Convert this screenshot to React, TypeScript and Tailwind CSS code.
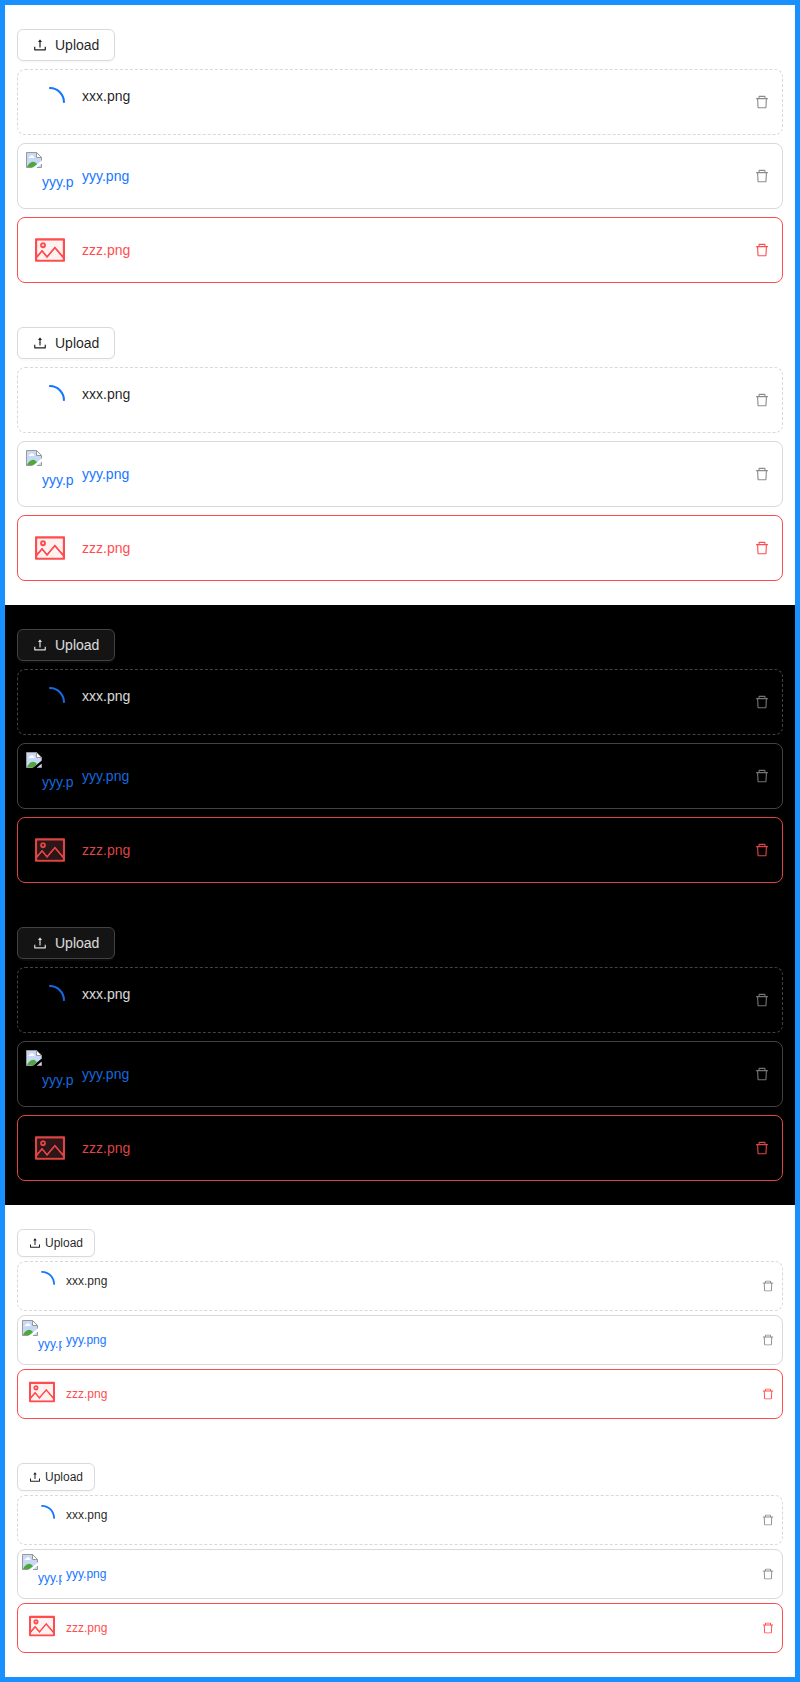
type Tone = 'light' | 'dark';

type Theme = {
  tone: Tone;
  compact: boolean;
};

type IconProps = { className: string };

const UploadIcon = ({ className }: IconProps) => (
  <svg viewBox="64 64 896 896" fill="currentColor" className={className}>
    <path d="M400 317.7h73.9V656c0 4.4 3.6 8 8 8h60c4.4 0 8-3.6 8-8V317.7H624c6.7 0 10.4-7.7 6.3-12.9L518.3 163a8 8 0 00-12.6 0l-112 141.7c-4.1 5.3-.4 13 6.3 13zM878 626h-60c-4.4 0-8 3.6-8 8v154H214V634c0-4.4-3.6-8-8-8h-60c-4.4 0-8 3.6-8 8v198c0 17.7 14.3 32 32 32h684c17.7 0 32-14.3 32-32V634c0-4.4-3.6-8-8-8z" />
  </svg>
);

const LoadingIcon = ({ className }: IconProps) => (
  <svg viewBox="0 0 1024 1024" fill="currentColor" className={className}>
    <path d="M988 548c-19.9 0-36-16.1-36-36 0-59.4-11.6-117-34.6-171.3a440.45 440.45 0 00-94.3-139.9 437.71 437.71 0 00-139.9-94.3C629 83.6 571.4 72 512 72c-19.9 0-36-16.1-36-36s16.1-36 36-36c69.1 0 136.2 13.5 199.3 40.3C772.3 66 827 103 874 150c47 47 83.9 101.8 109.7 162.7 26.7 63.1 40.2 130.2 40.2 199.3.1 19.9-16 36-35.9 36z" />
  </svg>
);

const DeleteIcon = ({ className }: IconProps) => (
  <svg viewBox="64 64 896 896" fill="currentColor" className={className}>
    <path d="M360 184h-8c4.4 0 8-3.6 8-8v8h304v-8c0 4.4 3.6 8 8 8h-8v72h72v-80c0-35.3-28.7-64-64-64H352c-35.3 0-64 28.7-64 64v80h72v-72zm504 72H160c-17.7 0-32 14.3-32 32v32c0 4.4 3.6 8 8 8h60.4l24.7 523c1.6 34.1 29.8 61 63.9 61h454c34.2 0 62.3-26.8 63.9-61l24.7-523H888c4.4 0 8-3.6 8-8v-32c0-17.7-14.3-32-32-32zM731.3 840H292.7l-24.2-512h487l-24.2 512z" />
  </svg>
);

const PictureIcon = ({ className, tone }: IconProps & Pick<Theme, 'tone'>) => {
  const soft = tone === 'dark' ? 'fill-[#2c1618]' : 'fill-[#fff2f0]';
  return (
    <svg viewBox="64 64 896 896" fill="currentColor" className={className}>
      <path d="M928 160H96c-17.7 0-32 14.3-32 32v640c0 17.7 14.3 32 32 32h832c17.7 0 32-14.3 32-32V192c0-17.7-14.3-32-32-32zm-40 632H136v-39.9l138.5-164.3 150.1 178L658.1 489 888 761.6V792zm0-129.8L664.2 396.8c-3.2-3.8-9-3.8-12.2 0L424.6 666.4l-144-170.7c-3.2-3.8-9-3.8-12.2 0L136 652.7V232h752v430.2z" />
      <path className={soft} d="M424.6 765.8l-150.1-178L136 752.1V792h752v-30.4L658.1 489z" />
      <path className={soft} d="M136 652.7l132.4-157c3.2-3.8 9-3.8 12.2 0l144 170.7L652 396.8c3.2-3.8 9-3.8 12.2 0L888 662.2V232H136v420.7zM304 280a88 88 0 110 176 88 88 0 010-176z" />
      <path className={soft} d="M276 368a28 28 0 1056 0 28 28 0 10-56 0z" />
      <path d="M304 456a88 88 0 100-176 88 88 0 000 176zm0-116c15.5 0 28 12.5 28 28s-12.5 28-28 28-28-12.5-28-28 12.5-28 28-28z" />
    </svg>
  );
};

const MissingImageIcon = () => (
  <svg viewBox="0 0 16 16" className="size-4 shrink-0">
    <path d="M.5.5H11L15.500 5V8.800L7.200 15.500H.5Z" fill="#c6d9f7" />
    <path d="M2.500 6A1.500 1.500 0 0 1 4 4.500A2 2 0 0 1 7.700 4.500A1.300 1.300 0 0 1 8.500 6Z" fill="#fff" />
    <path d="M1 15C2.500 12 4.500 9.800 7 9.800C8.800 9.800 10 10.800 11 12.300L7.500 15Z" fill="#4fa83a" />
    <path d="M11 15.500L15.500 11.800V15.500Z" fill="#c6d9f7" />
    <path d="M10.500 .5V5.500H15.500Z" fill="#fff" />
    <path
      d="M6.500 15.500H.5V.5H10.500L15.500 5.500V8.500M10.500 .5V5.500H15.500M15.500 12V15.500H11"
      fill="none"
      stroke="#999"
    />
  </svg>
);

type Status = 'uploading' | 'done' | 'error';

const files: { name: string; status: Status }[] = [
  { name: 'xxx.png', status: 'uploading' },
  { name: 'yyy.png', status: 'done' },
  { name: 'zzz.png', status: 'error' },
];

const palette = {
  light: {
    panel: 'bg-white text-black/88',
    button: 'border-[#d9d9d9] bg-white shadow-[0_2px_0_rgba(0,0,0,0.02)]',
    border: 'border-[#d9d9d9]',
    primary: 'text-[#1677ff]',
    error: 'text-[#ff4d4f]',
    errorBorder: 'border-[#ff4d4f]',
    action: 'text-black/45',
  },
  dark: {
    panel: 'bg-black text-white/85',
    button: 'border-[#424242] bg-[#141414] shadow-[0_2px_0_rgba(255,255,255,0.04)]',
    border: 'border-[#424242]',
    primary: 'text-[#1668dc]',
    error: 'text-[#dc4446]',
    errorBorder: 'border-[#dc4446]',
    action: 'text-white/45',
  },
};

function Thumbnail({ status, name, tone, compact }: Theme & { status: Status; name: string }) {
  const colors = palette[tone];
  const box = compact ? 'size-10' : 'size-12';
  if (status === 'done') {
    return (
      <div className={`${box} ${colors.primary} flex shrink-0 overflow-hidden`}>
        <MissingImageIcon />
        <span className={compact ? 'pt-3.5 leading-5' : 'pt-[19px] leading-[22px]'}>{name}</span>
      </div>
    );
  }
  const icon = compact ? 'size-[26px]' : 'size-[30px]';
  return (
    <div className={`${box} flex shrink-0 justify-center ${compact ? 'pt-[5px]' : 'pt-[9px]'}`}>
      {status === 'uploading' ? (
        <LoadingIcon className={`${icon} ${colors.primary}`} />
      ) : (
        <PictureIcon tone={tone} className={`${icon} ${colors.error}`} />
      )}
    </div>
  );
}

function FileRow({ name, status, tone, compact }: Theme & { name: string; status: Status }) {
  const colors = palette[tone];
  const failed = status === 'error';
  const nameColor = failed ? colors.error : status === 'done' ? colors.primary : '';
  const lift = status === 'uploading' ? (compact ? 'pb-2.5' : 'pb-3') : '';
  return (
    <li
      className={`flex items-center rounded-lg border ${failed ? colors.errorBorder : colors.border} ${
        status === 'uploading' ? 'border-dashed' : ''
      } ${compact ? 'h-[50px] gap-1 p-1' : 'h-[66px] gap-2 p-2'}`}
    >
      <Thumbnail status={status} name={name} tone={tone} compact={compact} />
      <span className={`flex-1 ${nameColor} ${lift}`}>{name}</span>
      <button
        aria-label="Remove file"
        className={`flex items-center justify-center ${compact ? 'size-5' : 'size-6'} ${
          failed ? colors.error : colors.action
        }`}
      >
        <DeleteIcon className={compact ? 'size-3' : 'size-3.5'} />
      </button>
    </li>
  );
}

function Uploader({ tone, compact }: Theme) {
  return (
    <div className={`flex flex-col items-start ${compact ? 'gap-1 text-xs leading-5' : 'gap-2 text-sm leading-[22px]'}`}>
      <button
        className={`flex items-center rounded-md border ${palette[tone].button} ${
          compact ? 'h-7 gap-1 px-[11px]' : 'h-8 gap-2 px-[15px]'
        }`}
      >
        <UploadIcon className={compact ? 'size-3' : 'size-3.5'} />
        <span>Upload</span>
      </button>
      <ul className={`flex flex-col self-stretch ${compact ? 'gap-1' : 'gap-2'}`}>
        {files.map((file) => (
          <FileRow key={file.name} {...file} tone={tone} compact={compact} />
        ))}
      </ul>
    </div>
  );
}

function Panel({ tone, compact }: Theme) {
  return (
    <section className={`flex flex-col gap-11 px-3 py-6 ${palette[tone].panel}`}>
      <Uploader tone={tone} compact={compact} />
      <Uploader tone={tone} compact={compact} />
    </section>
  );
}

export default function App() {
  return (
    <main className="border-[5px] border-[#1890ff] font-['Liberation_Sans',Arial,sans-serif]">
      <Panel tone="light" compact={false} />
      <Panel tone="dark" compact={false} />
      <Panel tone="light" compact />
    </main>
  );
}
